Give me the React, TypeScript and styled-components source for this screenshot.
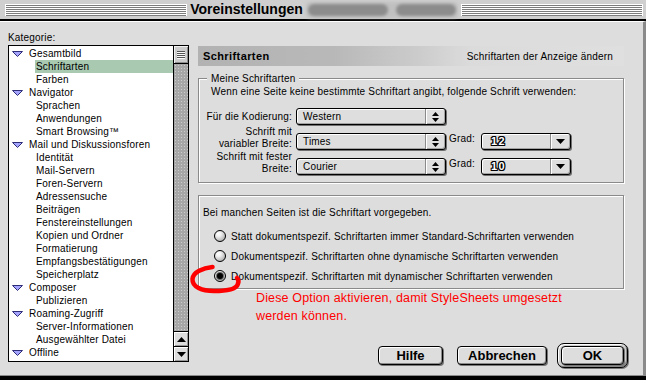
import React from 'react';
import styled, { createGlobalStyle, css } from 'styled-components';

const GlobalStyle = createGlobalStyle`
  html, body { margin: 0; padding: 0; background: #dddddd; }
  body { font-family: "Liberation Sans", Arial, sans-serif; font-size: 10px; letter-spacing: 0.18px; color: #000; }
  *, *::before, *::after { box-sizing: border-box; }
`;

const Window = styled.div`
  position: relative;
  width: 646px;
  height: 380px;
  display: flex;
  flex-direction: column;
  background: #dddddd;
  border-bottom: 4px solid #000;
  overflow: hidden;
`;

const TitleBar = styled.div`
  flex: none;
  height: 21px;
  display: flex;
  align-items: center;
  padding: 0 3px 0 5px;
  background: #cfcfcf;
  border-bottom: 2px solid #000;
`;

const Stripes = styled.div`
  flex: 1;
  height: 12px;
  background: repeating-linear-gradient(to bottom, #ffffff 0 1px, #7c7c7c 1px 2px);
  box-shadow: inset 1px 0 0 #fff, inset -1px 0 0 #fff;
`;

const Title = styled.div`
  padding: 0 3px;
  font: bold 14px "Liberation Sans", Arial, sans-serif;
  letter-spacing: 0;
  line-height: 19px;
  white-space: nowrap;
`;

const Redacted = styled.div`
  width: 152px;
  height: 16px;
  margin-right: 3px;
  display: flex;
  align-items: center;
  gap: 8px;
  padding: 0 2px;
  background: #c0c0c0;
  border-radius: 4px;
  filter: blur(1.6px);
`;

const Blob = styled.span<{ $w: number }>`
  width: ${p => p.$w}px;
  height: 12px;
  border-radius: 6px;
  background: #8c8c8c;
`;

const Body = styled.div`
  flex: 1;
  min-height: 0;
  display: flex;
  padding-left: 8px;
  border-top: 1px solid #fff;
  border-right: 3px solid #8a8a8a;
  border-bottom: 1px solid #8a8a8a;
`;

const Sidebar = styled.div`
  width: 181px;
  flex: none;
  display: flex;
  flex-direction: column;
  padding-top: 9px;
`;

const SideLabel = styled.div`
  line-height: 13px;
  margin-bottom: 1px;
`;

const ListBox = styled.div`
  height: 317px;
  display: flex;
  border: 1px solid #000;
  background: #fff;
`;

const Items = styled.div`
  width: 164px;
  flex: none;
  padding-top: 1px;
  overflow: hidden;
`;

const TreeRow = styled.div<{ $child?: boolean }>`
  height: 13px;
  display: flex;
  align-items: center;
  gap: 5px;
  line-height: 13px;
  white-space: nowrap;
  padding-left: ${p => (p.$child ? 26 : 3)}px;
`;

const TreeText = styled.span<{ $selected?: boolean }>`
  padding-left: 1px;
  ${p =>
    p.$selected &&
    css`
      flex: 1;
      background: #a9c9b1;
    `}
`;

const Scrollbar = styled.div`
  width: 15px;
  flex: none;
  display: flex;
  flex-direction: column;
  border-left: 1px solid #000;
  background: #dddddd;
`;

const Thumb = styled.div`
  height: 18px;
  display: flex;
  align-items: center;
  justify-content: center;
  background: #cdcdcd;
  border-bottom: 1px solid #000;
  box-shadow: inset 1px 1px 0 #f2f2f2, inset -1px -1px 0 #8e8e8e;
`;

const Grip = styled.span`
  width: 8px;
  height: 8px;
  background: repeating-linear-gradient(to bottom, #555 0 1px, #fafafa 1px 2px);
`;

const Track = styled.div`
  flex: 1;
  background: radial-gradient(circle, #cdcdcd 0.7px, transparent 1px) 0 0 / 3px 3px, #a7a7a7;
`;

const ArrowBtn = styled.div`
  height: 15px;
  display: flex;
  align-items: center;
  justify-content: center;
  border-top: 1px solid #000;
  background: #dddddd;
  box-shadow: inset 1px 1px 0 #fff, inset -1px -1px 0 #999;
`;

const Main = styled.div`
  width: 426px;
  flex: none;
  margin-left: 9px;
  display: flex;
  flex-direction: column;
  padding-top: 24px;
  padding-bottom: 7px;
`;

const PanelHeader = styled.div`
  height: 20px;
  flex: none;
  display: flex;
  align-items: center;
  justify-content: space-between;
  padding: 0 11px 0 5px;
  background:
    radial-gradient(circle, rgba(0, 0, 0, 0.09) 0.6px, transparent 0.9px) 0 0 / 2px 2px,
    linear-gradient(to right, #bdbdbd 0%, #c4c4c4 32%, #d9d9d9 52%, #e9e9e9 64%, #ededed 100%);
`;

const PanelTitle = styled.span`
  font-weight: bold;
  font-size: 11px;
  letter-spacing: 0.4px;
`;

const PanelHint = styled.span`
  white-space: nowrap;
`;

const Group = styled.fieldset`
  margin: 6px 0 0;
  padding: 0 0 7px;
  min-width: 0;
  border: 1px solid #8a8a8a;
  box-shadow: inset 1px 1px 0 #fff, 1px 1px 0 #fff;
`;

const Legend = styled.legend`
  margin-left: 8px;
  padding: 0 4px;
  line-height: 13px;
  font-size: 10px;
  background: #dddddd;
`;

const Desc = styled.div`
  padding-left: 12px;
  line-height: 13px;
  margin-bottom: 10px;
  white-space: nowrap;
`;

const Rows = styled.div`
  display: flex;
  flex-direction: column;
  gap: 1px;
`;

const FontRow = styled.div`
  display: flex;
  align-items: flex-end;
`;

const RowLabel = styled.div<{ $single?: boolean }>`
  width: 93px;
  flex: none;
  text-align: right;
  line-height: 12px;
  white-space: nowrap;
  ${p => p.$single && css`align-self: center;`}
`;

const Popup = styled.div<{ $w: number }>`
  width: ${p => p.$w}px;
  height: 17px;
  flex: none;
  display: flex;
  border: 1px solid #000;
  border-radius: 3px;
  background: #dedede;
  box-shadow: inset 1px 1px 0 #fff, inset -1px -1px 0 #a2a2a2, 1px 1px 0 #6f6f6f;
`;

const FontPopup = styled(Popup)`
  margin-left: 4px;
`;

const PopupText = styled.span<{ $outline?: boolean }>`
  flex: 1;
  padding-left: 6px;
  line-height: 15px;
  white-space: nowrap;
  ${p =>
    p.$outline &&
    css`
      padding-left: 9px;
      font-weight: bold;
      font-size: 11px;
      color: #fff;
      letter-spacing: 1.5px;
      text-shadow: -1px 0 0 #000, 1px 0 0 #000, 0 -1px 0 #000, 0 1px 0 #000, 1px 1px 0 #000, -1px -1px 0 #000,
        1px -1px 0 #000, -1px 1px 0 #000;
    `}
`;

const PopupArrow = styled.span`
  width: 20px;
  flex: none;
  display: flex;
  align-items: center;
  justify-content: center;
  border-left: 1px solid #8a8a8a;
  box-shadow: inset 1px 0 0 #fff;
`;

const Grad = styled.span`
  align-self: center;
  margin: 0 6px 0 3px;
  line-height: 17px;
`;

const Group2 = styled(Group)`
  margin-top: 12px;
  padding: 10px 0 2px;
`;

const Lead = styled.div`
  padding-left: 4px;
  line-height: 13px;
  margin-bottom: 7px;
  white-space: nowrap;
`;

const RadioRow = styled.div`
  height: 20px;
  display: flex;
  align-items: center;
  gap: 5px;
  padding-left: 15px;
  white-space: nowrap;
`;

const RadioDot = styled.span`
  width: 12px;
  height: 12px;
  flex: none;
  display: flex;
  align-items: center;
  justify-content: center;
  border-radius: 50%;
  border: 1px solid #000;
  background: radial-gradient(circle at 35% 30%, #ffffff 0%, #f1f1f1 25%, #bcbcbc 70%, #8f8f8f 100%);
`;

const RadioCenter = styled.span`
  width: 6px;
  height: 6px;
  border-radius: 50%;
  background: #000;
  box-shadow: 0 0 0 1px #666;
`;

const Note = styled.div`
  padding-left: 58px;
  color: #ff0000;
  font-size: 12.5px;
  letter-spacing: 0.15px;
  line-height: 18px;
  white-space: nowrap;
`;

const ButtonRow = styled.div`
  margin-top: auto;
  margin-right: -4px;
  display: flex;
  justify-content: flex-end;
  align-items: center;
`;

const Button = styled.button<{ $w: number; $gap?: number }>`
  width: ${p => p.$w}px;
  height: 19px;
  margin: 0 ${p => p.$gap ?? 0}px 0 0;
  padding: 0;
  font: bold 13px "Liberation Sans", Arial, sans-serif;
  line-height: 17px;
  color: #000;
  background: #dddddd;
  border: 1px solid #000;
  border-radius: 4px;
  box-shadow: inset 1px 1px 0 #fff, inset -1px -1px 0 #8a8a8a, 1px 1px 0 #777;
`;

const DefaultRing = styled.div`
  display: flex;
  padding: 2px 3px;
  border: 1px solid #000;
  border-radius: 7px;
  background: #cdcdcd;
  box-shadow: inset 1px 1px 0 #fff, inset -1px -1px 0 #888, 1px 1px 0 #777;
`;

const Scribble = styled.svg`
  position: absolute;
  left: 186px;
  top: 260px;
  width: 58px;
  height: 40px;
  pointer-events: none;
`;

const Twisty = () => (
  <svg width="11" height="6" viewBox="0 0 11 6">
    <path d="M0.5 0.5 H10.5 L5.5 5.5 Z" fill="#a4a4ff" stroke="#2e2e78" strokeWidth="1" strokeLinejoin="round" />
  </svg>
);

const UpDown = () => (
  <svg width="7" height="10" viewBox="0 0 7 10">
    <path d="M0 4 L3.5 0 L7 4 Z M0 6 L7 6 L3.5 10 Z" fill="#000" />
  </svg>
);

const Down = ({ w = 9, h = 5 }: { w?: number; h?: number }) => (
  <svg width={w} height={h} viewBox={`0 0 ${w} ${h}`}>
    <path d={`M0 0 H${w} L${w / 2} ${h} Z`} fill="#000" />
  </svg>
);

const Up = () => (
  <svg width="9" height="5" viewBox="0 0 9 5">
    <path d="M0 5 H9 L4.5 0 Z" fill="#000" />
  </svg>
);

type Node = { label: string; parent?: boolean; selected?: boolean };

const tree: Node[] = [
  { label: 'Gesamtbild', parent: true },
  { label: 'Schriftarten', selected: true },
  { label: 'Farben' },
  { label: 'Navigator', parent: true },
  { label: 'Sprachen' },
  { label: 'Anwendungen' },
  { label: 'Smart Browsing™' },
  { label: 'Mail und Diskussionsforen', parent: true },
  { label: 'Identität' },
  { label: 'Mail-Servern' },
  { label: 'Foren-Servern' },
  { label: 'Adressensuche' },
  { label: 'Beiträgen' },
  { label: 'Fenstereinstellungen' },
  { label: 'Kopien und Ordner' },
  { label: 'Formatierung' },
  { label: 'Empfangsbestätigungen' },
  { label: 'Speicherplatz' },
  { label: 'Composer', parent: true },
  { label: 'Publizieren' },
  { label: 'Roaming-Zugriff', parent: true },
  { label: 'Server-Informationen' },
  { label: 'Ausgewählter Datei' },
  { label: 'Offline', parent: true },
];

const radios = [
  { label: 'Statt dokumentspezif. Schriftarten immer Standard-Schriftarten verwenden', on: false },
  { label: 'Dokumentspezif. Schriftarten ohne dynamische Schriftarten verwenden', on: false },
  { label: 'Dokumentspezif. Schriftarten mit dynamischer Schriftarten verwenden', on: true },
];

export default function App() {
  return (
    <>
      <GlobalStyle />
      <Window>
        <TitleBar>
          <Stripes />
          <Title>Voreinstellungen</Title>
          <Redacted>
            <Blob $w={80} />
            <Blob $w={60} />
          </Redacted>
          <Stripes />
        </TitleBar>
        <Body>
          <Sidebar>
            <SideLabel>Kategorie:</SideLabel>
            <ListBox>
              <Items>
                {tree.map(n => (
                  <TreeRow key={n.label} $child={!n.parent}>
                    {n.parent && <Twisty />}
                    <TreeText $selected={n.selected}>{n.label}</TreeText>
                  </TreeRow>
                ))}
              </Items>
              <Scrollbar>
                <Thumb>
                  <Grip />
                </Thumb>
                <Track />
                <ArrowBtn>
                  <Up />
                </ArrowBtn>
                <ArrowBtn>
                  <Down />
                </ArrowBtn>
              </Scrollbar>
            </ListBox>
          </Sidebar>
          <Main>
            <PanelHeader>
              <PanelTitle>Schriftarten</PanelTitle>
              <PanelHint>Schriftarten der Anzeige ändern</PanelHint>
            </PanelHeader>
            <Group>
              <Legend>Meine Schriftarten</Legend>
              <Desc>Wenn eine Seite keine bestimmte Schriftart angibt, folgende Schrift verwenden:</Desc>
              <Rows>
                <FontRow>
                  <RowLabel $single>Für die Kodierung:</RowLabel>
                  <FontPopup $w={150}>
                    <PopupText>Western</PopupText>
                    <PopupArrow>
                      <UpDown />
                    </PopupArrow>
                  </FontPopup>
                </FontRow>
                <FontRow>
                  <RowLabel>
                    Schrift mit
                    <br />
                    variabler Breite:
                  </RowLabel>
                  <FontPopup $w={150}>
                    <PopupText>Times</PopupText>
                    <PopupArrow>
                      <UpDown />
                    </PopupArrow>
                  </FontPopup>
                  <Grad>Grad:</Grad>
                  <Popup $w={90}>
                    <PopupText $outline>12</PopupText>
                    <PopupArrow>
                      <Down />
                    </PopupArrow>
                  </Popup>
                </FontRow>
                <FontRow>
                  <RowLabel>
                    Schrift mit fester
                    <br />
                    Breite:
                  </RowLabel>
                  <FontPopup $w={150}>
                    <PopupText>Courier</PopupText>
                    <PopupArrow>
                      <UpDown />
                    </PopupArrow>
                  </FontPopup>
                  <Grad>Grad:</Grad>
                  <Popup $w={90}>
                    <PopupText $outline>10</PopupText>
                    <PopupArrow>
                      <Down />
                    </PopupArrow>
                  </Popup>
                </FontRow>
              </Rows>
            </Group>
            <Group2>
              <Lead>Bei manchen Seiten ist die Schriftart vorgegeben.</Lead>
              {radios.map(r => (
                <RadioRow key={r.label}>
                  <RadioDot>{r.on && <RadioCenter />}</RadioDot>
                  {r.label}
                </RadioRow>
              ))}
            </Group2>
            <Note>
              Diese Option aktivieren, damit StyleSheets umgesetzt
              <br />
              werden können.
            </Note>
            <ButtonRow>
              <Button $w={65} $gap={14}>Hilfe</Button>
              <Button $w={90} $gap={10}>Abbrechen</Button>
              <DefaultRing>
                <Button $w={63}>OK</Button>
              </DefaultRing>
            </ButtonRow>
          </Main>
        </Body>
        <Scribble viewBox="0 0 58 40">
          <path
            d="M26.5 7 C17 8 7 12 6.5 19 C6 27 16 31 28 31 C39 31 49 30 51.5 25 C53 22 52.5 19.5 51 18"
            fill="none"
            stroke="#ff0000"
            strokeWidth="4.5"
            strokeLinecap="round"
            strokeLinejoin="round"
          />
        </Scribble>
      </Window>
    </>
  );
}
